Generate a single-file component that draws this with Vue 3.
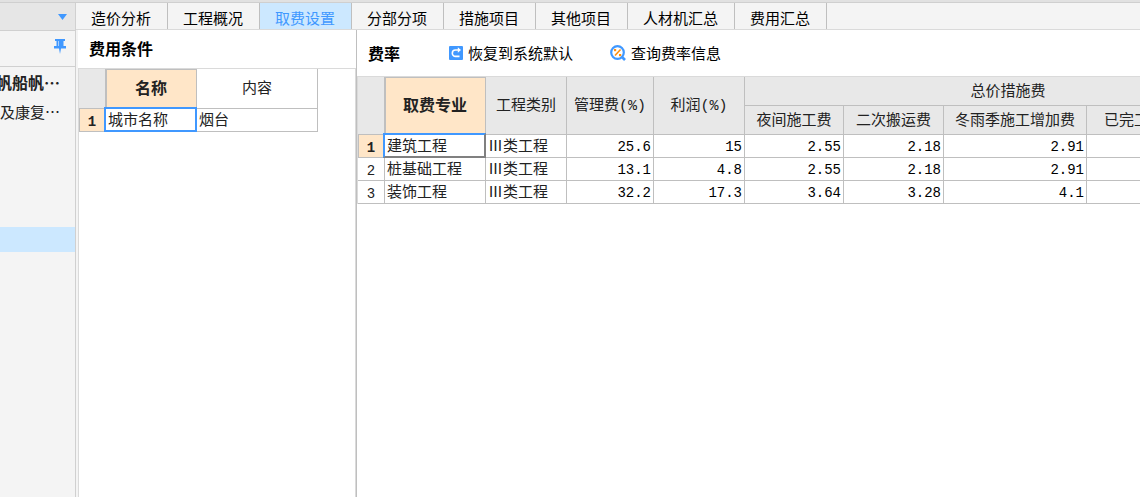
<script setup>
import { ref } from 'vue'

const tabs = ['造价分析', '工程概况', '取费设置', '分部分项', '措施项目', '其他项目', '人材机汇总', '费用汇总']
const active = ref('取费设置')

const rows = [
  { name: '建筑工程', type: 'Ⅲ类工程', values: ['25.6', '15', '2.55', '2.18', '2.91', ''] },
  { name: '桩基础工程', type: 'Ⅲ类工程', values: ['13.1', '4.8', '2.55', '2.18', '2.91', ''] },
  { name: '装饰工程', type: 'Ⅲ类工程', values: ['32.2', '17.3', '3.64', '3.28', '4.1', ''] }
]
</script>

<template>
  <div class="app">
    <div class="strip"></div>
    <div class="shell">
      <aside class="side">
        <button class="drop" type="button" aria-label="展开">
          <svg width="9" height="6" viewBox="0 0 9 6"><path d="M0 0h9L4.500 6z" fill="#4098ff" /></svg>
        </button>
        <div class="pinbar">
          <button class="pin" type="button" aria-label="固定">
            <svg width="12" height="15" viewBox="0 0 12 15">
              <path d="M1 0h10v2H9.500v5H12v2.500H7L6 15 5 9.500H0V7h2.500V2H1z" fill="#4098ff" />
              <path d="M4.500 2v5" stroke="#a9d0ff" stroke-width="1" />
            </svg>
          </button>
        </div>
        <div class="node strong">帆船帆…</div>
        <div class="node">及康复…</div>
        <div class="picked"></div>
      </aside>

      <main class="main">
        <nav class="tabs">
          <button
            v-for="t in tabs"
            :key="t"
            type="button"
            class="tab"
            :class="{ on: t === active }"
            @click="active = t"
          >{{ t }}</button>
        </nav>

        <div class="panels">
          <section class="cond">
            <h2 class="title">费用条件</h2>
            <div class="box framed">
              <table class="grid small">
                <colgroup><col class="c27" /><col class="c91" /><col class="c121" /></colgroup>
                <thead>
                  <tr><th class="corner"></th><th class="cur">名称</th><th class="plain">内容</th></tr>
                </thead>
                <tbody>
                  <tr><th class="cur" scope="row">1</th><td class="sel">城市名称</td><td>烟台</td></tr>
                </tbody>
              </table>
            </div>
          </section>

          <section class="rates">
            <div class="bar">
              <h2 class="cap">费率</h2>
              <button class="act reset" type="button">
                <svg width="14" height="14" viewBox="0 0 14 14">
                  <rect width="14" height="14" rx="1" fill="#4098ff" />
                  <path d="M9.500 4H6.500a3.200 3.200 0 0 0 0 6.400H10.500" fill="none" stroke="#fff" stroke-width="1.600" />
                  <path d="M8.800 1.300L12 4 8.800 6.700z" fill="#fff" />
                </svg>
                <span>恢复到系统默认</span>
              </button>
              <button class="act" type="button">
                <svg width="16" height="16" viewBox="0 0 16 16">
                  <circle cx="7.500" cy="7.500" r="6.300" fill="#fff" stroke="#4098ff" stroke-width="2.200" />
                  <path d="M11.500 11.500l3.500 3.500" stroke="#4098ff" stroke-width="2.600" />
                  <path d="M10.500 4.500L5 10.500" stroke="#ff8f0f" stroke-width="1.600" />
                  <rect x="4" y="4" width="2.200" height="2.200" fill="#ff8f0f" />
                  <rect x="9" y="9" width="2.200" height="2.200" fill="#ff8f0f" />
                </svg>
                <span>查询费率信息</span>
              </button>
            </div>
            <div class="box">
              <table class="grid large">
                <colgroup>
                  <col class="c27" /><col class="c101" /><col class="c81" /><col class="c87" /><col class="c91" />
                  <col class="c99" /><col class="c100" /><col class="c143" /><col class="c185" />
                </colgroup>
                <thead>
                  <tr>
                    <th class="corner" rowspan="2"></th>
                    <th class="cur" rowspan="2">取费专业</th>
                    <th rowspan="2">工程类别</th>
                    <th rowspan="2">管理费(%)</th>
                    <th rowspan="2">利润(%)</th>
                    <th colspan="4">总价措施费</th>
                  </tr>
                  <tr>
                    <th>夜间施工费</th>
                    <th>二次搬运费</th>
                    <th>冬雨季施工增加费</th>
                    <th class="last">已完工</th>
                  </tr>
                </thead>
                <tbody>
                  <tr v-for="(r, i) in rows" :key="r.name">
                    <th scope="row" :class="{ cur: i === 0 }">{{ i + 1 }}</th>
                    <td :class="{ sel: i === 0 }">{{ r.name }}</td>
                    <td>{{ r.type }}</td>
                    <td v-for="(v, j) in r.values" :key="j" class="num">{{ v }}</td>
                  </tr>
                </tbody>
              </table>
            </div>
          </section>
        </div>
      </main>
    </div>
  </div>
</template>

<style>
body {
  margin: 0;
}
</style>

<style scoped>
* {
  box-sizing: border-box;
}
.app {
  min-height: 100vh;
  display: flex;
  flex-direction: column;
  overflow: hidden;
  background: #fff;
  color: #000;
  font: 15px/20px "Noto Sans CJK SC", sans-serif;
}
button {
  margin: 0;
  padding: 0;
  border: 0;
  background: none;
  color: inherit;
  font: inherit;
}
svg {
  display: block;
  flex: none;
}
.strip {
  height: 3px;
  background: #e1e1e1;
  border-bottom: 1px solid #cfcfcf;
}
.shell {
  flex: 1;
  display: flex;
}
.side {
  flex: 0 0 76px;
  background: #f4f4f4;
  border-right: 1px solid #d0d0d0;
  overflow: hidden;
}
.drop {
  width: 100%;
  height: 28px;
  display: flex;
  justify-content: flex-end;
  align-items: center;
  padding-right: 8px;
  background: #e6e6e6;
  border-bottom: 1px solid #d0d0d0;
}
.pinbar {
  height: 36px;
  display: flex;
  justify-content: flex-end;
  align-items: flex-start;
  padding: 8px 9px 0 0;
  border-bottom: 1px solid #d0d0d0;
}
.node {
  height: 30px;
  display: flex;
  justify-content: flex-end;
  align-items: center;
  padding-right: 15px;
  white-space: nowrap;
  color: #222;
}
.strong {
  font-size: 16px;
  font-weight: bold;
}
.picked {
  height: 25px;
  margin-top: 100px;
  background: #cce8ff;
}
.main {
  flex: 1;
  min-width: 0;
  display: flex;
  flex-direction: column;
}
.tabs {
  display: flex;
  height: 27px;
  background: #f4f4f4;
  border-bottom: 1px solid #dadada;
}
.tab {
  padding: 3px 16px 0 15px;
  border-right: 1px solid #bfbfbf;
  white-space: nowrap;
}
.on {
  background: #cce8ff;
  color: #4098ff;
}
.panels {
  flex: 1;
  display: flex;
}
.cond {
  flex: 0 0 280px;
  display: flex;
  flex-direction: column;
  border-left: 2px solid #f4f4f4;
}
h2 {
  margin: 0;
  font-size: 16px;
  line-height: 20px;
}
.title {
  height: 38px;
  padding: 8px 0 0 11px;
}
.box {
  border: solid #dadada;
  border-width: 1px 0 0 1px;
}
.framed {
  flex: 1;
  border-right-width: 1px;
}
.rates {
  flex: 1;
  min-width: 0;
  overflow: hidden;
  border-left: 1px solid #bfbfbf;
}
.bar {
  display: flex;
  align-items: center;
  height: 46px;
  padding-left: 11px;
}
.cap {
  width: 81px;
}
.act {
  display: flex;
  align-items: center;
  gap: 5px;
  white-space: nowrap;
}
.reset {
  margin-right: 37px;
}
.grid {
  table-layout: fixed;
  border-collapse: separate;
  border-spacing: 0;
  color: #222;
  font-family: "Liberation Mono", "Noto Sans CJK SC", monospace;
}
.grid th,
.grid td {
  padding: 3px 0 0;
  border: solid #bfbfbf;
  border-width: 0 1px 1px 0;
  line-height: 18px;
  white-space: nowrap;
}
.grid th {
  background: #e8e8e8;
  font-weight: normal;
  font-size: 15px;
}
.grid td {
  position: relative;
  height: 23px;
  padding: 3px 3px 0 2px;
}
.grid tbody th {
  height: 23px;
  background: #fff;
  font-size: 14px;
}
.grid th.cur {
  background: #ffe6c8;
  box-shadow: inset 1px 1px #bfbfbf;
  font-weight: bold;
}
.grid thead .cur {
  font-size: 16px;
}
.grid tbody th.cur {
  box-shadow: inset 1px 0 #bfbfbf;
}
.grid th.plain {
  background: #fff;
}
.grid td.num {
  padding: 2px 2px 0;
  text-align: right;
  color: #000;
  font-size: 14px;
}
.grid th.last {
  padding-left: 17px;
  text-align: left;
}
.small {
  width: 239px;
}
.small thead th {
  height: 40px;
}
.large {
  width: 914px;
}
.large thead th {
  height: 29px;
}
.sel::after {
  content: "";
  position: absolute;
  inset: -2px -1px -1px -2px;
  border: 2px solid #4098ff;
}
.large .sel::after {
  border-right-color: #808080;
  border-bottom-color: #808080;
}
.c27 { width: 27px; }
.c81 { width: 81px; }
.c87 { width: 87px; }
.c91 { width: 91px; }
.c99 { width: 99px; }
.c100 { width: 100px; }
.c101 { width: 101px; }
.c121 { width: 121px; }
.c143 { width: 143px; }
.c185 { width: 185px; }
</style>
